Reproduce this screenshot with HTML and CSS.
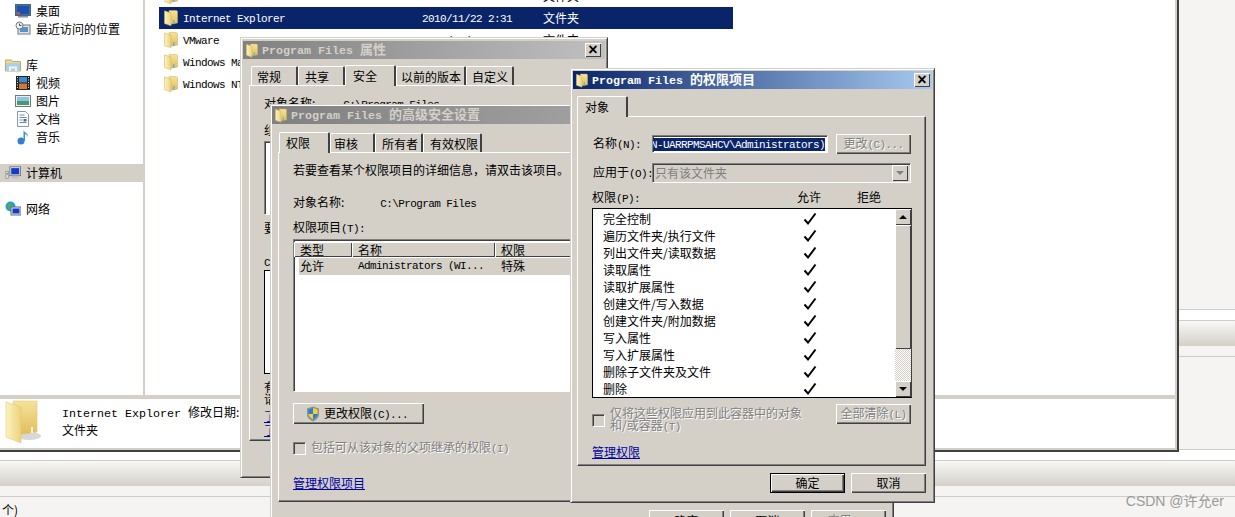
FILE: index.html
```html
<!DOCTYPE html>
<html lang="zh-CN">
<head>
    <meta charset="UTF-8">
    <title>Program Files 的权限项目</title>
    <link rel="stylesheet" href="styles.css">
</head>
<body>
    <svg class="defs" xmlns="http://www.w3.org/2000/svg">
        <defs>
            <linearGradient id="flap" x1="0" y1="0" x2="1" y2="0">
                <stop offset="0" stop-color="#fdf3c0"/>
                <stop offset="1" stop-color="#ecd27c"/>
            </linearGradient>
            <linearGradient id="body" x1="0" y1="0" x2="0" y2="1">
                <stop offset="0" stop-color="#f6e39a"/>
                <stop offset="1" stop-color="#e0bd5a"/>
            </linearGradient>
            <symbol id="folder" viewBox="0 0 14 16">
                <path d="M5 .5h7.500l1 1V13l-8 1.500z" fill="url(#body)" stroke="#cfae5c" stroke-width=".5"/>
                <path d="M.5 .8 7 3v12.800L.5 13.600z" fill="url(#flap)" stroke="#d0b060" stroke-width=".5"/>
                <rect x="9" y="10" width="1.500" height="4" fill="#6fb0d8"/>
            </symbol>
            <symbol id="monitor" viewBox="0 0 16 16">
                <rect x=".5" y="1.500" width="15" height="11" fill="#3f6ea8" stroke="#56606c"/>
                <rect x="2" y="3" width="12" height="8" fill="#1c50b0"/>
                <rect x="2" y="9" width="3" height="2" fill="#e05030"/>
                <rect x="3" y="13" width="10" height="1.500" fill="#8a929c"/>
            </symbol>
            <symbol id="pc" viewBox="0 0 18 16">
                <rect x="1" y="6" width="3" height="8" fill="#d8dcd8" stroke="#70787c" stroke-width=".6"/>
                <rect x="1.800" y="8" width="1.400" height="2" fill="#40b040"/>
                <rect x="5.500" y="1" width="12" height="10" fill="#dfe3e6" stroke="#70787c"/>
                <rect x="7" y="2.500" width="9" height="7" fill="#1838c8"/>
                <rect x="8" y="11" width="7" height="3" fill="#b8bec4"/>
            </symbol>
        </defs>
    </svg>

    <div class="desk">
        <div class="desk-top"></div>
        <div class="band-white"></div>
        <div class="band-grad"></div>
        <div class="band-plain"></div>
        <div class="desk-mid"></div>
        <div class="band-white"></div>
        <div class="band-grad"></div>
        <div class="band-plain"></div>
        <div class="status"><span class="cn">个)</span></div>
    </div>

    <div class="explorer">
        <div class="exp-main">
            <div class="sidebar">
                <div class="nav sub">
                    <svg class="ico"><use href="#monitor"/></svg>桌面
                </div>
                <div class="nav sub">
                    <svg class="ico" viewBox="0 0 16 16"><rect x="3" y="4" width="12" height="9" fill="#dfe3e6" stroke="#70787c"/><rect x="5" y="6" width="8" height="5" fill="#5a90c8"/><circle cx="4.500" cy="4.500" r="3.500" fill="#f4f4f4" stroke="#70787c"/><path d="M4.500 2.500v2h2" fill="none" stroke="#444"/></svg>最近访问的位置
                </div>
                <div class="nav"></div>
                <div class="nav">
                    <svg class="ico" viewBox="0 0 16 16"><path d="M.5 3h6l1 1.500h8V14H.5z" fill="#f3d98a" stroke="#c9a857"/><path d="M1 6h14v8H1z" fill="#a8d0ec"/><path d="M4 14V9.500h8V14h-2v-2.500H6V14z" fill="#f8f4e0"/></svg>库
                </div>
                <div class="nav sub">
                    <svg class="ico" viewBox="0 0 16 16"><rect x="1" y="1" width="14" height="14" fill="#222"/><rect x="4" y="2" width="8" height="5.500" fill="#3a8ad0"/><rect x="4" y="8.500" width="8" height="5.500" fill="#d07838"/><path d="M2 2.500h1M2 5h1M2 7.500h1M2 10h1M2 12.500h1M13 2.500h1M13 5h1M13 7.500h1M13 10h1M13 12.500h1" stroke="#ddd"/></svg>视频
                </div>
                <div class="nav sub">
                    <svg class="ico" viewBox="0 0 16 16"><rect x=".5" y="2.500" width="15" height="11" fill="#eef0f0" stroke="#70787c"/><rect x="2" y="4" width="12" height="4" fill="#8cc4ec"/><rect x="2" y="8" width="12" height="4" fill="#4a9a70"/></svg>图片
                </div>
                <div class="nav sub">
                    <svg class="ico" viewBox="0 0 16 16"><path d="M2.500 .5h8l3 3v12h-11z" fill="#fff" stroke="#8a96a8"/><path d="M4.500 4h5M4.500 6.500h7M4.500 9h3M4.500 11.500h7" stroke="#6a8ac0"/><rect x="8.500" y="8" width="3" height="2.500" fill="#3a70b0"/></svg>文档
                </div>
                <div class="nav sub">
                    <svg class="ico" viewBox="0 0 16 16"><circle cx="6" cy="12" r="3.500" fill="#2f80d0"/><path d="M8.500 12V1c1 3 5 3 4.500 7-.5-2-2.500-3-3-3v7z" fill="#3a90dc"/></svg>音乐
                </div>
                <div class="nav"></div>
                <div class="nav current">
                    <svg class="ico"><use href="#pc"/></svg>计算机
                </div>
                <div class="nav"></div>
                <div class="nav">
                    <svg class="ico" viewBox="0 0 16 16"><circle cx="5.500" cy="5.500" r="5" fill="#2f9ad0"/><path d="M2 3h4l1 3-3 3z" fill="#50b050"/><rect x="6" y="6" width="10" height="8" fill="#dfe3e6" stroke="#60707c"/><rect x="7.500" y="7.500" width="7" height="5" fill="#1838c8"/></svg>网络
                </div>
            </div>
            <div class="files">
                <div class="file first">
                    <span class="f-name"><svg class="fld"><use href="#folder"/></svg></span>
                    <span class="f-date"></span><span>文件夹</span>
                </div>
                <div class="file picked">
                    <span class="f-name"><svg class="fld"><use href="#folder"/></svg><span class="en">Internet Explorer</span></span>
                    <span class="f-date en">2010/11/22 2:31</span><span>文件夹</span>
                </div>
                <div class="file">
                    <span class="f-name"><svg class="fld"><use href="#folder"/></svg><span class="en">VMware</span></span>
                    <span class="f-date en">2010/11/22 10:52</span><span>文件夹</span>
                </div>
                <div class="file">
                    <span class="f-name"><svg class="fld"><use href="#folder"/></svg><span class="en">Windows Mail</span></span>
                </div>
                <div class="file">
                    <span class="f-name"><svg class="fld"><use href="#folder"/></svg><span class="en">Windows NT</span></span>
                </div>
            </div>
        </div>
        <div class="exp-split"></div>
        <div class="details">
            <svg class="big-folder" viewBox="0 0 36 44">
                <ellipse cx="24" cy="36" rx="12" ry="4" fill="#d8d8d8"/>
                <path d="M8 1h24v31l-20 3z" fill="url(#body)" stroke="#e0c878" stroke-width=".6"/>
                <path d="M1 2 16 7v36L1 37z" fill="url(#flap)" stroke="#e0c878" stroke-width=".6"/>
                <rect x="26" y="27" width="2" height="6" fill="#f4f4d8"/>
            </svg>
            <div class="det-text">
                <div class="det-line"><span class="en">Internet Explorer </span>修改日期:</div>
                <div class="det-line">文件夹</div>
            </div>
        </div>
    </div>

    <!-- Program Files 属性 -->
    <div class="win win-props">
        <div class="title idle">
            <svg class="fld"><use href="#folder"/></svg>
            <span class="title-text"><span class="en">Program Files </span>属性</span>
            <span class="close">×</span>
        </div>
        <div class="body">
            <div class="tabs">
                <span class="tab w47">常规</span>
                <span class="tab w47 p6">共享</span>
                <span class="tab on w51 p7">安全</span>
                <span class="tab w70 p4">以前的版本</span>
                <span class="tab w48">自定义</span>
            </div>
            <div class="panel props-panel">
                <div class="p-line p-owner">对象名称:<span class="en p-path">C:\Program Files</span></div>
                <div class="p-line p-group">组或用户名(G):</div>
                <div class="sunken box-a"></div>
                <div class="p-line p-hint">要更改权限，请单击“编辑”。</div>
                <div class="p-line p-perm"><span class="en">CREATOR OWNER </span>的权限</div>
                <div class="box-b"></div>
                <div class="p-note">有关特殊权限或高级设置，<br>请单击“高级”。</div>
                <a class="link p-link">了解访问控制和权限</a>
                <a class="link">了解访问控制和权限</a>
            </div>
        </div>
    </div>

    <!-- 高级安全设置 -->
    <div class="win win-adv">
        <div class="title idle">
            <svg class="fld"><use href="#folder"/></svg>
            <span class="title-text"><span class="en">Program Files </span>的高级安全设置</span>
        </div>
        <div class="body">
            <div class="tabs">
                <span class="tab on w51 p6">权限</span>
                <span class="tab w45 p3">审核</span>
                <span class="tab w48 p6">所有者</span>
                <span class="tab w59 p6">有效权限</span>
            </div>
            <div class="panel adv-panel">
                <div class="a-intro">若要查看某个权限项目的详细信息，请双击该项目。</div>
                <div class="a-owner">对象名称:<span class="en a-path">C:\Program Files</span></div>
                <div class="a-label">权限项目<span class="en">(T):</span></div>
                <div class="sunken a-list">
                    <div class="a-head">
                        <span class="col w58">类型</span>
                        <span class="col w143">名称</span>
                        <span class="col a-rest">权限</span>
                    </div>
                    <div class="a-row">
                        <span class="a-c1">允许</span>
                        <span class="a-c2 en">Administrators (WI...</span>
                        <span>特殊</span>
                    </div>
                </div>
                <button class="btn a-change">
                    <svg class="shield" viewBox="0 0 14 16">
                        <path d="M7 .5 13 2.500v6c0 3.500-3 5.500-6 7-3-1.500-6-3.500-6-7v-6z" fill="#8a9298"/>
                        <path d="M7 2 2.500 3.500V8H7z" fill="#2a7fd0"/>
                        <path d="M7 2l4.500 1.500V8H7z" fill="#f6d030"/>
                        <path d="M7 8H2.500c.2 2.500 2.300 4 4.500 5.200z" fill="#f6d030"/>
                        <path d="M7 8h4.500c-.2 2.500-2.300 4-4.500 5.200z" fill="#2a7fd0"/>
                    </svg>
                    <span>更改权限<span class="en">(C)...</span></span>
                </button>
                <label class="a-check off">
                    <span class="cb"></span><span>包括可从该对象的父项继承的权限<span class="en">(I)</span></span>
                </label>
                <a class="link a-link">管理权限项目</a>
            </div>
            <div class="foot adv-foot">
                <button class="btn">确定</button>
                <button class="btn">取消</button>
                <button class="btn off">应用<span class="en">(A)</span></button>
            </div>
        </div>
    </div>

    <!-- 权限项目 -->
    <div class="win win-item">
        <div class="title live">
            <svg class="fld"><use href="#folder"/></svg>
            <span class="title-text"><span class="en">Program Files </span>的权限项目</span>
            <span class="close">×</span>
        </div>
        <div class="body">
            <div class="tabs">
                <span class="tab on w51 p7">对象</span>
            </div>
            <div class="panel item-panel">
                <div class="i-row i-name">
                    <span class="i-label">名称<span class="en">(N):</span></span>
                    <div class="sunken name-box"><span class="en picked-text">(WIN-UARRPMSAHCV\Administrators)</span></div>
                    <button class="btn small off">更改<span class="en">(C)...</span></button>
                </div>
                <div class="i-row i-apply">
                    <span class="i-label">应用于<span class="en">(O):</span></span>
                    <div class="sunken combo">
                        <span class="combo-text">只有该文件夹</span>
                        <span class="combo-btn"><span class="arr-down grey"></span></span>
                    </div>
                </div>
                <div class="i-heads">
                    <span class="i-h1">权限<span class="en">(P):</span></span>
                    <span class="i-h2">允许</span>
                    <span>拒绝</span>
                </div>
                <div class="perm-list">
                    <div class="perms">
                        <div class="perm"><span class="perm-name">完全控制</span><svg class="tick" viewBox="0 0 14 14"><path d="M1.500 7.500 5 11.500 12.500 1.500" /></svg></div>
                        <div class="perm"><span class="perm-name">遍历文件夹/执行文件</span><svg class="tick" viewBox="0 0 14 14"><path d="M1.500 7.500 5 11.500 12.500 1.500" /></svg></div>
                        <div class="perm"><span class="perm-name">列出文件夹/读取数据</span><svg class="tick" viewBox="0 0 14 14"><path d="M1.500 7.500 5 11.500 12.500 1.500" /></svg></div>
                        <div class="perm"><span class="perm-name">读取属性</span><svg class="tick" viewBox="0 0 14 14"><path d="M1.500 7.500 5 11.500 12.500 1.500" /></svg></div>
                        <div class="perm"><span class="perm-name">读取扩展属性</span><svg class="tick" viewBox="0 0 14 14"><path d="M1.500 7.500 5 11.500 12.500 1.500" /></svg></div>
                        <div class="perm"><span class="perm-name">创建文件/写入数据</span><svg class="tick" viewBox="0 0 14 14"><path d="M1.500 7.500 5 11.500 12.500 1.500" /></svg></div>
                        <div class="perm"><span class="perm-name">创建文件夹/附加数据</span><svg class="tick" viewBox="0 0 14 14"><path d="M1.500 7.500 5 11.500 12.500 1.500" /></svg></div>
                        <div class="perm"><span class="perm-name">写入属性</span><svg class="tick" viewBox="0 0 14 14"><path d="M1.500 7.500 5 11.500 12.500 1.500" /></svg></div>
                        <div class="perm"><span class="perm-name">写入扩展属性</span><svg class="tick" viewBox="0 0 14 14"><path d="M1.500 7.500 5 11.500 12.500 1.500" /></svg></div>
                        <div class="perm"><span class="perm-name">删除子文件夹及文件</span><svg class="tick" viewBox="0 0 14 14"><path d="M1.500 7.500 5 11.500 12.500 1.500" /></svg></div>
                        <div class="perm"><span class="perm-name">删除</span><svg class="tick" viewBox="0 0 14 14"><path d="M1.500 7.500 5 11.500 12.500 1.500" /></svg></div>
                    </div>
                    <div class="scroll">
                        <span class="sb-btn"><span class="arr-up"></span></span>
                        <span class="sb-thumb"></span>
                        <span class="sb-track"></span>
                        <span class="sb-btn"><span class="arr-down"></span></span>
                    </div>
                </div>
                <div class="i-apply-check">
                    <label class="i-check off">
                        <span class="cb"></span>
                        <span>仅将这些权限应用到此容器中的对象<br>和/或容器<span class="en">(T)</span></span>
                    </label>
                    <button class="btn small off">全部清除<span class="en">(L)</span></button>
                </div>
                <a class="link i-link">管理权限</a>
            </div>
            <div class="foot item-foot">
                <button class="btn default">确定</button>
                <button class="btn">取消</button>
            </div>
        </div>
    </div>

    <div class="mark">CSDN @许允er</div>
</body>
</html>
```

FILE: styles.css
```css
* {
    box-sizing: border-box;
}
html, body {
    margin: 0;
    height: 517px;
    overflow: hidden;
}
body {
    position: relative;
    font-family: "Noto Sans CJK SC", "Liberation Sans", sans-serif;
    font-size: 12px;
    line-height: 18px;
    color: #000;
    background: #f5f4f2;
}
.defs {
    display: block;
    width: 0;
    height: 0;
}
.en {
    font-family: "Liberation Mono", monospace;
    font-size: 11px;
    letter-spacing: -.6px;
    white-space: pre;
}

/* window behind everything */
.desk-top {
    height: 310px;
    border-bottom: 1px solid #cfcdc8;
}
.band-white {
    height: 11px;
    background: #fff;
    border-bottom: 1px solid #cfcdc8;
}
.band-grad {
    height: 25px;
    background: linear-gradient(#f8f8f6, #d4d0c8);
}
.band-plain {
    height: 11px;
    border-bottom: 1px solid #cfcdc8;
}
.desk-mid {
    height: 93px;
    border-bottom: 1px solid #cfcdc8;
}
.status {
    padding-left: 2px;
    padding-top: 4px;
}

/* explorer */
.explorer {
    position: absolute;
    left: 0;
    top: 0;
    width: 1179px;
    height: 452px;
    background: #fff;
    border-right: 2px solid #404040;
    border-bottom: 2px solid #404040;
    display: flex;
    flex-direction: column;
    box-shadow: inset -2px -2px #d4d0c8;
}
.exp-main {
    display: flex;
    height: 395px;
    overflow: hidden;
}
.sidebar {
    width: 145px;
    flex: none;
    padding-top: 2px;
    border-right: 2px solid #d4d0c8;
}
.nav {
    height: 18px;
    display: flex;
    align-items: center;
    padding-left: 5px;
}
.nav.sub {
    padding-left: 15px;
}
.nav.current {
    background: #d4d0c8;
}
.ico {
    width: 16px;
    height: 16px;
    margin-right: 5px;
    flex: none;
}
.files {
    flex: 1;
    padding-left: 14px;
}
.file {
    width: 574px;
    height: 22px;
    display: flex;
    align-items: center;
}
.file.first {
    margin-top: -15px;
}
.file.picked {
    background: #0a246a;
    color: #fff;
}
.file .en {
    padding-top: 2px;
}
.f-name {
    width: 263px;
    display: flex;
    align-items: center;
    padding-left: 5px;
}
.f-date {
    width: 121px;
}
.fld {
    width: 14px;
    height: 16px;
    flex: none;
    margin-right: 5px;
}
.exp-split {
    height: 4px;
    background: #d4d0c8;
}
.details {
    display: flex;
    height: 49px;
}
.big-folder {
    width: 36px;
    height: 44px;
    margin: 1px 21px 0 5px;
    flex: none;
}
.det-text {
    padding-top: 4px;
    white-space: nowrap;
}
.det-line {
    height: 18px;
}
.det-text .en {
    font-size: 11.67px;
    letter-spacing: 0;
}

/* windows */
.win {
    position: absolute;
    background: #d4d0c8;
    border: 1px solid;
    border-color: #d4d0c8 #404040 #404040 #d4d0c8;
    box-shadow: inset 1px 1px #fff, inset -1px -1px #808080;
    padding: 2px;
}
.win-props {
    left: 240px;
    top: 37px;
    width: 368px;
    height: 441px;
    padding-top: 3px;
}
.win-adv {
    left: 270px;
    top: 104px;
    width: 624px;
    height: 440px;
    padding: 1px;
}
.win-item {
    left: 570px;
    top: 68px;
    width: 365px;
    height: 435px;
}
.title {
    height: 18px;
    display: flex;
    align-items: center;
    padding: 0 2px 0 3px;
    font-weight: bold;
    font-size: 13px;
    white-space: nowrap;
}
.win-props .title {
    padding-right: 4px;
}
.title .en {
    font-size: 11.67px;
    font-weight: bold;
    letter-spacing: 0;
}
.title .fld {
    width: 12px;
    height: 15px;
    margin-right: 4px;
}
.title-text {
    flex: 1;
}
.title.idle {
    background: linear-gradient(90deg, #808080, #c0c0c0);
    color: #d4d0c8;
}
.title.live {
    background: linear-gradient(90deg, #0a246a, #a6caf0);
    color: #fff;
}
.close {
    width: 16px;
    height: 14px;
    background: #d4d0c8;
    color: #000;
    font-family: "Liberation Sans", sans-serif;
    font-size: 16px;
    line-height: 13px;
    text-align: center;
    box-shadow: inset 1px 1px #fff, inset -1px -1px #404040;
}
.body {
    padding: 6px 8px 0 6px;
}
.win-adv .body {
    padding-top: 8px;
    padding-right: 6px;
}
.win-item .body {
    padding: 7px 6px 0 4px;
}

/* tabs */
.tabs {
    display: flex;
    align-items: flex-end;
    height: 20px;
    padding-left: 2px;
    position: relative;
    z-index: 1;
}
.win-adv .tabs {
    padding-left: 1px;
}
.win-item .tabs {
    padding-left: 0;
}
.tab {
    height: 19px;
    padding-left: 5px;
    line-height: 20px;
    border-top: 1px solid #fff;
    border-left: 1px solid #fff;
    border-right: 2px solid #404040;
    border-radius: 2px 2px 0 0;
    flex: none;
}
.tab.on {
    height: 21px;
    margin-bottom: -1px;
    line-height: 19px;
    background: #d4d0c8;
}
.p3 { padding-left: 3px; }
.p4 { padding-left: 4px; }
.p6 { padding-left: 6px; }
.p7 { padding-left: 7px; }
.w45 { width: 45px; }
.w47 { width: 47px; }
.w48 { width: 48px; }
.w51 { width: 51px; }
.w59 { width: 59px; }
.w70 { width: 70px; }
.panel {
    border: 1px solid;
    border-color: #fff #404040 #404040 #fff;
    box-shadow: inset -1px -1px #808080;
}
.sunken {
    background: #fff;
    border: 1px solid;
    border-color: #808080 #fff #fff #808080;
    box-shadow: inset 1px 1px #404040;
}

/* buttons and links */
.btn {
    width: 75px;
    height: 21px;
    padding: 0;
    font: inherit;
    line-height: 18px;
    color: #000;
    background: #d4d0c8;
    border: 0;
    box-shadow: inset 1px 1px #fff, inset -1px -1px #404040, inset -2px -2px #808080;
    flex: none;
}
.btn.small {
    height: 20px;
}
.btn.default {
    outline: 1px solid #000;
    outline-offset: -1px;
    box-shadow: inset 2px 2px #fff, inset -2px -2px #404040, inset -3px -3px #808080;
}
.off {
    color: #808080;
    text-shadow: 1px 1px #fff;
}
.link {
    display: block;
    color: #0000a0;
    text-decoration: underline;
}
.cb {
    width: 13px;
    height: 13px;
    flex: none;
    background: #d4d0c8;
    border: 1px solid;
    border-color: #808080 #fff #fff #808080;
    box-shadow: inset 1px 1px #404040;
}
.foot {
    display: flex;
    justify-content: flex-end;
    gap: 6px;
}

/* properties dialog, mostly covered */
.props-panel {
    height: 356px;
    padding-left: 14px;
    white-space: nowrap;
}
.p-line {
    height: 18px;
}
.p-owner {
    margin-top: 8px;
}
.p-path {
    margin-left: 28px;
}
.p-group {
    margin-top: 9px;
}
.box-a {
    height: 74px;
    margin-top: 2px;
    width: 320px;
}
.p-hint {
    margin-top: 4px;
}
.p-perm {
    margin-top: 15px;
}
.box-b {
    width: 320px;
    height: 104px;
    background: #fff;
    border: 1px solid #000;
}
.p-note {
    line-height: 12px;
    margin-top: 7px;
}
.p-link {
    margin-top: 5px;
    line-height: 11px;
}

/* advanced dialog */
.adv-panel {
    height: 350px;
    padding: 0 14px;
    display: flex;
    flex-direction: column;
    align-items: flex-start;
}
.a-intro {
    margin-top: 8px;
}
.a-owner {
    margin-top: 14px;
    height: 18px;
}
.a-path {
    margin-left: 36px;
}
.a-label {
    margin-top: 7px;
    height: 18px;
}
.a-list {
    width: 575px;
    height: 153px;
    margin-top: 3px;
    padding: 2px 0 0;
}
.a-head {
    display: flex;
    height: 15px;
    line-height: 16px;
    background: #d4d0c8;
}
.col {
    padding-left: 6px;
    box-shadow: inset 1px 1px #fff, inset -1px -1px #404040;
}
.w58 { width: 58px; }
.w143 { width: 143px; }
.a-rest {
    flex: 1;
}
.a-row {
    display: flex;
    height: 17px;
    margin-left: 5px;
    margin-top: 1px;
    padding-left: 1px;
    line-height: 16px;
    background: #d4d0c8;
}
.a-c1 {
    width: 58px;
}
.a-c2 {
    width: 143px;
}
.a-change {
    width: 131px;
    height: 21px;
    margin-top: 11px;
    padding-left: 13px;
    display: flex;
    align-items: center;
    gap: 4px;
}
.shield {
    width: 14px;
    height: 16px;
}
.a-check {
    display: flex;
    align-items: center;
    gap: 5px;
    margin-top: 14px;
}
.a-link {
    margin-top: 16px;
}
.adv-foot {
    margin-top: 8px;
}

/* permission entry dialog */
.item-panel {
    height: 350px;
    padding: 17px 14px 0;
    display: flex;
    flex-direction: column;
}
.i-row {
    display: flex;
    align-items: center;
}
.i-label {
    width: 60px;
    flex: none;
    padding-left: 1px;
    white-space: nowrap;
}
.name-box {
    width: 176px;
    height: 18px;
    margin-right: 8px;
    padding: 2px 2px 1px;
    display: flex;
    justify-content: flex-end;
    overflow: hidden;
}
.picked-text {
    flex: none;
    background: #0a246a;
    color: #fff;
    line-height: 14px;
}
.i-apply {
    margin-top: 9px;
}
.combo {
    flex: 1;
    height: 20px;
    background: #d4d0c8;
    display: flex;
    align-items: center;
    padding: 2px;
}
.combo-text {
    flex: 1;
    color: #808080;
}
.combo-btn {
    width: 16px;
    height: 16px;
    display: flex;
    align-items: center;
    justify-content: center;
    background: #d4d0c8;
    box-shadow: inset 1px 1px #fff, inset -1px -1px #404040;
}
.arr-down, .arr-up {
    width: 0;
    height: 0;
    border-left: 4px solid transparent;
    border-right: 4px solid transparent;
}
.arr-down {
    border-top: 4px solid #000;
}
.arr-down.grey {
    border-top-color: #808080;
}
.arr-up {
    border-bottom: 4px solid #000;
}
.i-heads {
    display: flex;
    margin-top: 5px;
    height: 18px;
    margin-bottom: 2px;
}
.i-h1 {
    width: 205px;
}
.i-h2 {
    width: 60px;
}
.perm-list {
    width: 320px;
    height: 190px;
    flex: none;
    display: flex;
    background: #fff;
    border: 1px solid #000;
    border-right-color: #404040;
}
.perms {
    flex: 1;
    padding: 1px 0 0 10px;
}
.perm {
    display: flex;
    align-items: center;
    height: 17px;
}
.perm-name {
    width: 200px;
}
.tick {
    width: 14px;
    height: 14px;
    fill: none;
    stroke: #000;
    stroke-width: 2;
}
.scroll {
    width: 16px;
    display: flex;
    flex-direction: column;
}
.sb-btn {
    height: 16px;
    display: flex;
    align-items: center;
    justify-content: center;
    background: #d4d0c8;
    box-shadow: inset 1px 1px #fff, inset -1px -1px #404040;
}
.sb-thumb {
    height: 124px;
    background: #d4d0c8;
    box-shadow: inset 1px 1px #fff, inset -1px -1px #404040;
}
.sb-track {
    flex: 1;
    background: repeating-conic-gradient(#fff 0 25%, #d4d0c8 0 50%) 0 0 / 2px 2px;
}
.i-apply-check {
    display: flex;
    justify-content: space-between;
    align-items: flex-start;
    margin-top: 6px;
}
.i-check {
    display: flex;
    align-items: center;
    gap: 5px;
    line-height: 12px;
    padding-top: 3px;
}
.i-link {
    margin-top: 10px;
    width: max-content;
}
.item-foot {
    margin-top: 7px;
}
.item-foot .btn {
    height: 20px;
}

.mark {
    position: absolute;
    right: 11px;
    top: 492px;
    font-family: "Liberation Sans", "Noto Sans CJK SC", sans-serif;
    font-size: 14px;
    color: #9a9a9a;
}
```
